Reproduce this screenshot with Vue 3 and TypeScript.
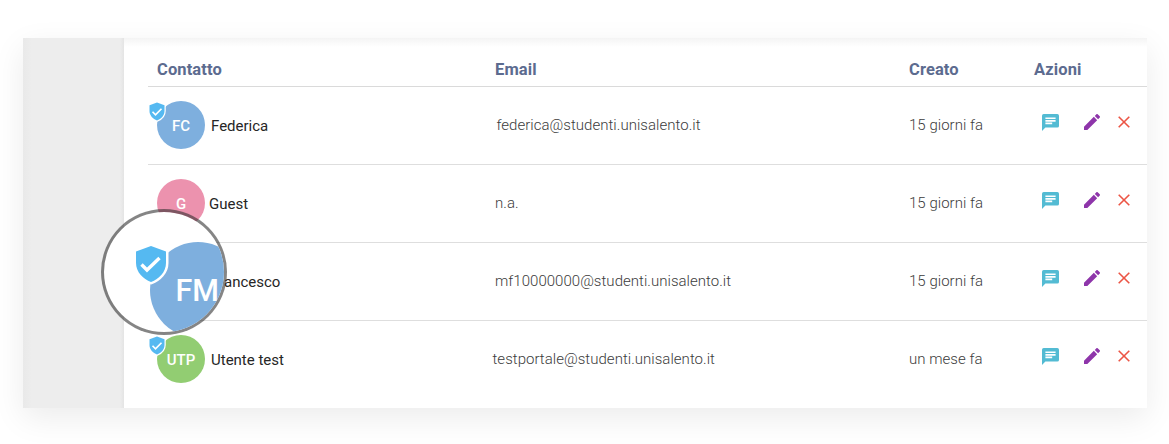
<script setup lang="ts">
interface Contact {
  id: string
  initials: string
  name: string
  email: string
  created: string
  verified: boolean
}

const contacts: Contact[] = [
  { id: 'federica', initials: 'FC', name: 'Federica', email: 'federica@studenti.unisalento.it', created: '15 giorni fa', verified: true },
  { id: 'guest', initials: 'G', name: 'Guest', email: 'n.a.', created: '15 giorni fa', verified: false },
  { id: 'francesco', initials: '', name: 'ancesco', email: 'mf10000000@studenti.unisalento.it', created: '15 giorni fa', verified: false },
  { id: 'utente', initials: 'UTP', name: 'Utente test', email: 'testportale@studenti.unisalento.it', created: 'un mese fa', verified: true },
]
</script>

<template>
  <main class="stage">
    <section class="panel">
      <aside class="rail"></aside>
      <div class="content">
        <div class="grid head">
          <span>Contatto</span><span>Email</span><span>Creato</span><span>Azioni</span>
        </div>
        <div v-for="c in contacts" :key="c.id" class="grid row" :class="c.id">
          <div class="person">
            <div class="avatar">
              <span class="initials">{{ c.initials }}</span>
              <svg v-if="c.verified" class="badge" viewBox="0 0 34 39">
                <path class="halo" d="M16 1 31 6.500V18C31 27 24 34 16 37 8 34 1 27 1 18V6.500Z" />
                <path class="shield" d="M16 1 31 6.500V18C31 27 24 34 16 37 8 34 1 27 1 18V6.500Z" />
                <path class="tick" d="m7 19.500 6 6L25 13.500" />
              </svg>
            </div>
            <span class="name">{{ c.name }}</span>
          </div>
          <span class="email">{{ c.email }}</span>
          <span class="created">{{ c.created }}</span>
          <div class="actions">
            <svg class="chat" viewBox="2 2 20 20"><path d="M20 2H4a2 2 0 0 0-1.990 2L2 22l4-4h14a2 2 0 0 0 2-2V4a2 2 0 0 0-2-2ZM6 9h12v2H6V9Zm8 5H6v-2h8v2Zm4-6H6V6h12v2Z" /></svg>
            <svg class="pencil" viewBox="3 3 18 18"><path d="M3 17.250V21h3.750L17.810 9.940l-3.750-3.750L3 17.250ZM20.710 7.040a1 1 0 0 0 0-1.410l-2.340-2.340a1 1 0 0 0-1.410 0l-1.830 1.830 3.750 3.750 1.830-1.830Z" /></svg>
            <svg class="remove" viewBox="0 0 12 12"><path d="M.7.7 11.300 11.300M11.300.7.7 11.300" /></svg>
          </div>
        </div>
      </div>
    </section>

    <div class="lens">
      <div class="lens-avatar">FM</div>
      <svg class="lens-badge" viewBox="0 0 34 39">
        <path class="halo" d="M16 1 31 6.500V18C31 27 24 34 16 37 8 34 1 27 1 18V6.500Z" />
        <path class="shield" d="M16 1 31 6.500V18C31 27 24 34 16 37 8 34 1 27 1 18V6.500Z" />
        <path class="tick" d="m6.500 19.500 5.500 5.500L24.500 13" />
      </svg>
    </div>
  </main>
</template>

<style>
body { background: #fff; overflow: hidden; }
</style>

<style scoped>
.stage {
  position: relative;
  box-sizing: border-box;
  width: 1169px;
  height: 444px;
  padding: 38px 22px 36px 23px;
  overflow: hidden;
  font: 16px/20px Roboto, sans-serif;
}
.panel {
  display: flex;
  height: 370px;
  background: #fff;
  box-shadow: 0 10px 30px rgba(0, 0, 0, 0.08);
}
.rail {
  box-sizing: border-box;
  width: 101px;
  background: linear-gradient(90deg, #e9e9e9, #ededed 9px, #ededed 97px, #e4e4e4);
}
.content {
  flex: 1;
  padding-left: 24px;
  background: linear-gradient(#f4f4f4, #fff 9px);
}
.grid {
  display: grid;
  grid-template-columns: 338px 414px 125px 1fr;
  box-sizing: border-box;
  padding-left: 9px;
  align-items: center;
}
.head {
  height: 49px;
  padding-top: 15px;
  border-bottom: 1px solid #dadada;
  color: #5c6b8f;
  font-weight: 700;
  letter-spacing: 0.1px;
  font-size: 16.500px;
}
.row {
  height: 78px;
  padding-bottom: 2px;
  border-bottom: 1px solid #dedede;
  white-space: nowrap;
}
.row:last-child { border-bottom-color: transparent; }
.person { display: flex; align-items: center; gap: 6px; color: #262626; font-size: 15px; }
.avatar {
  position: relative;
  display: flex;
  align-items: center;
  justify-content: center;
  width: 48px;
  height: 48px;
  border-radius: 50%;
  color: #fff;
  font-size: 15px;
  font-weight: 500;
}
.initials { padding-top: 2px; }
.name { padding-top: 2px; }
.federica .avatar { background: #7eafde; }
.guest .avatar { background: #ec92ae; }
.guest .person { gap: 4px; }
.francesco .person { padding-left: 13px; }
.utente .avatar { background: #92cd72; }
.badge { position: absolute; left: -8px; top: 1.500px; width: 17px; height: 19.500px; overflow: visible; }
.halo { fill: #fff; stroke: #fff; stroke-width: 5; stroke-linejoin: round; }
.shield { fill: #55b9f1; }
.tick { fill: none; stroke: #fff; stroke-width: 3.400; }
.email, .created { color: #3c3c3c; font-size: 15px; font-weight: 300; letter-spacing: 0.03px; }
.email { padding-left: 1.500px; }
.guest .email, .francesco .email { padding-left: 0; }
.utente .email { margin-left: -2.500px; padding-left: 0; }
.actions { display: flex; align-items: center; padding: 0 0 5px 7.500px; }
.chat { width: 17px; height: 17px; fill: #53bbd3; }
.pencil { width: 16px; height: 16px; margin-left: 25px; fill: #8e35aa; }
.remove { width: 12px; height: 12px; margin-left: 18.500px; fill: none; stroke: #ec5545; stroke-width: 1.600; }
.lens {
  position: absolute;
  left: 101px;
  top: 209px;
  box-sizing: border-box;
  width: 126px;
  height: 126px;
  border: 3px solid rgba(40, 40, 40, 0.57);
  border-radius: 50%;
  background: #fff;
  background-clip: padding-box;
  overflow: hidden;
}
.lens-avatar {
  position: absolute;
  left: 46px;
  top: 30px;
  box-sizing: border-box;
  width: 96px;
  height: 96px;
  padding: 31px 0 0 25.500px;
  border-radius: 50%;
  background: #7eafde;
  color: #fff;
  font-size: 30.500px;
  line-height: 36px;
  font-weight: 500;
}
.lens-badge { position: absolute; left: 31px; top: 33px; width: 34px; height: 39px; overflow: visible; }
</style>
